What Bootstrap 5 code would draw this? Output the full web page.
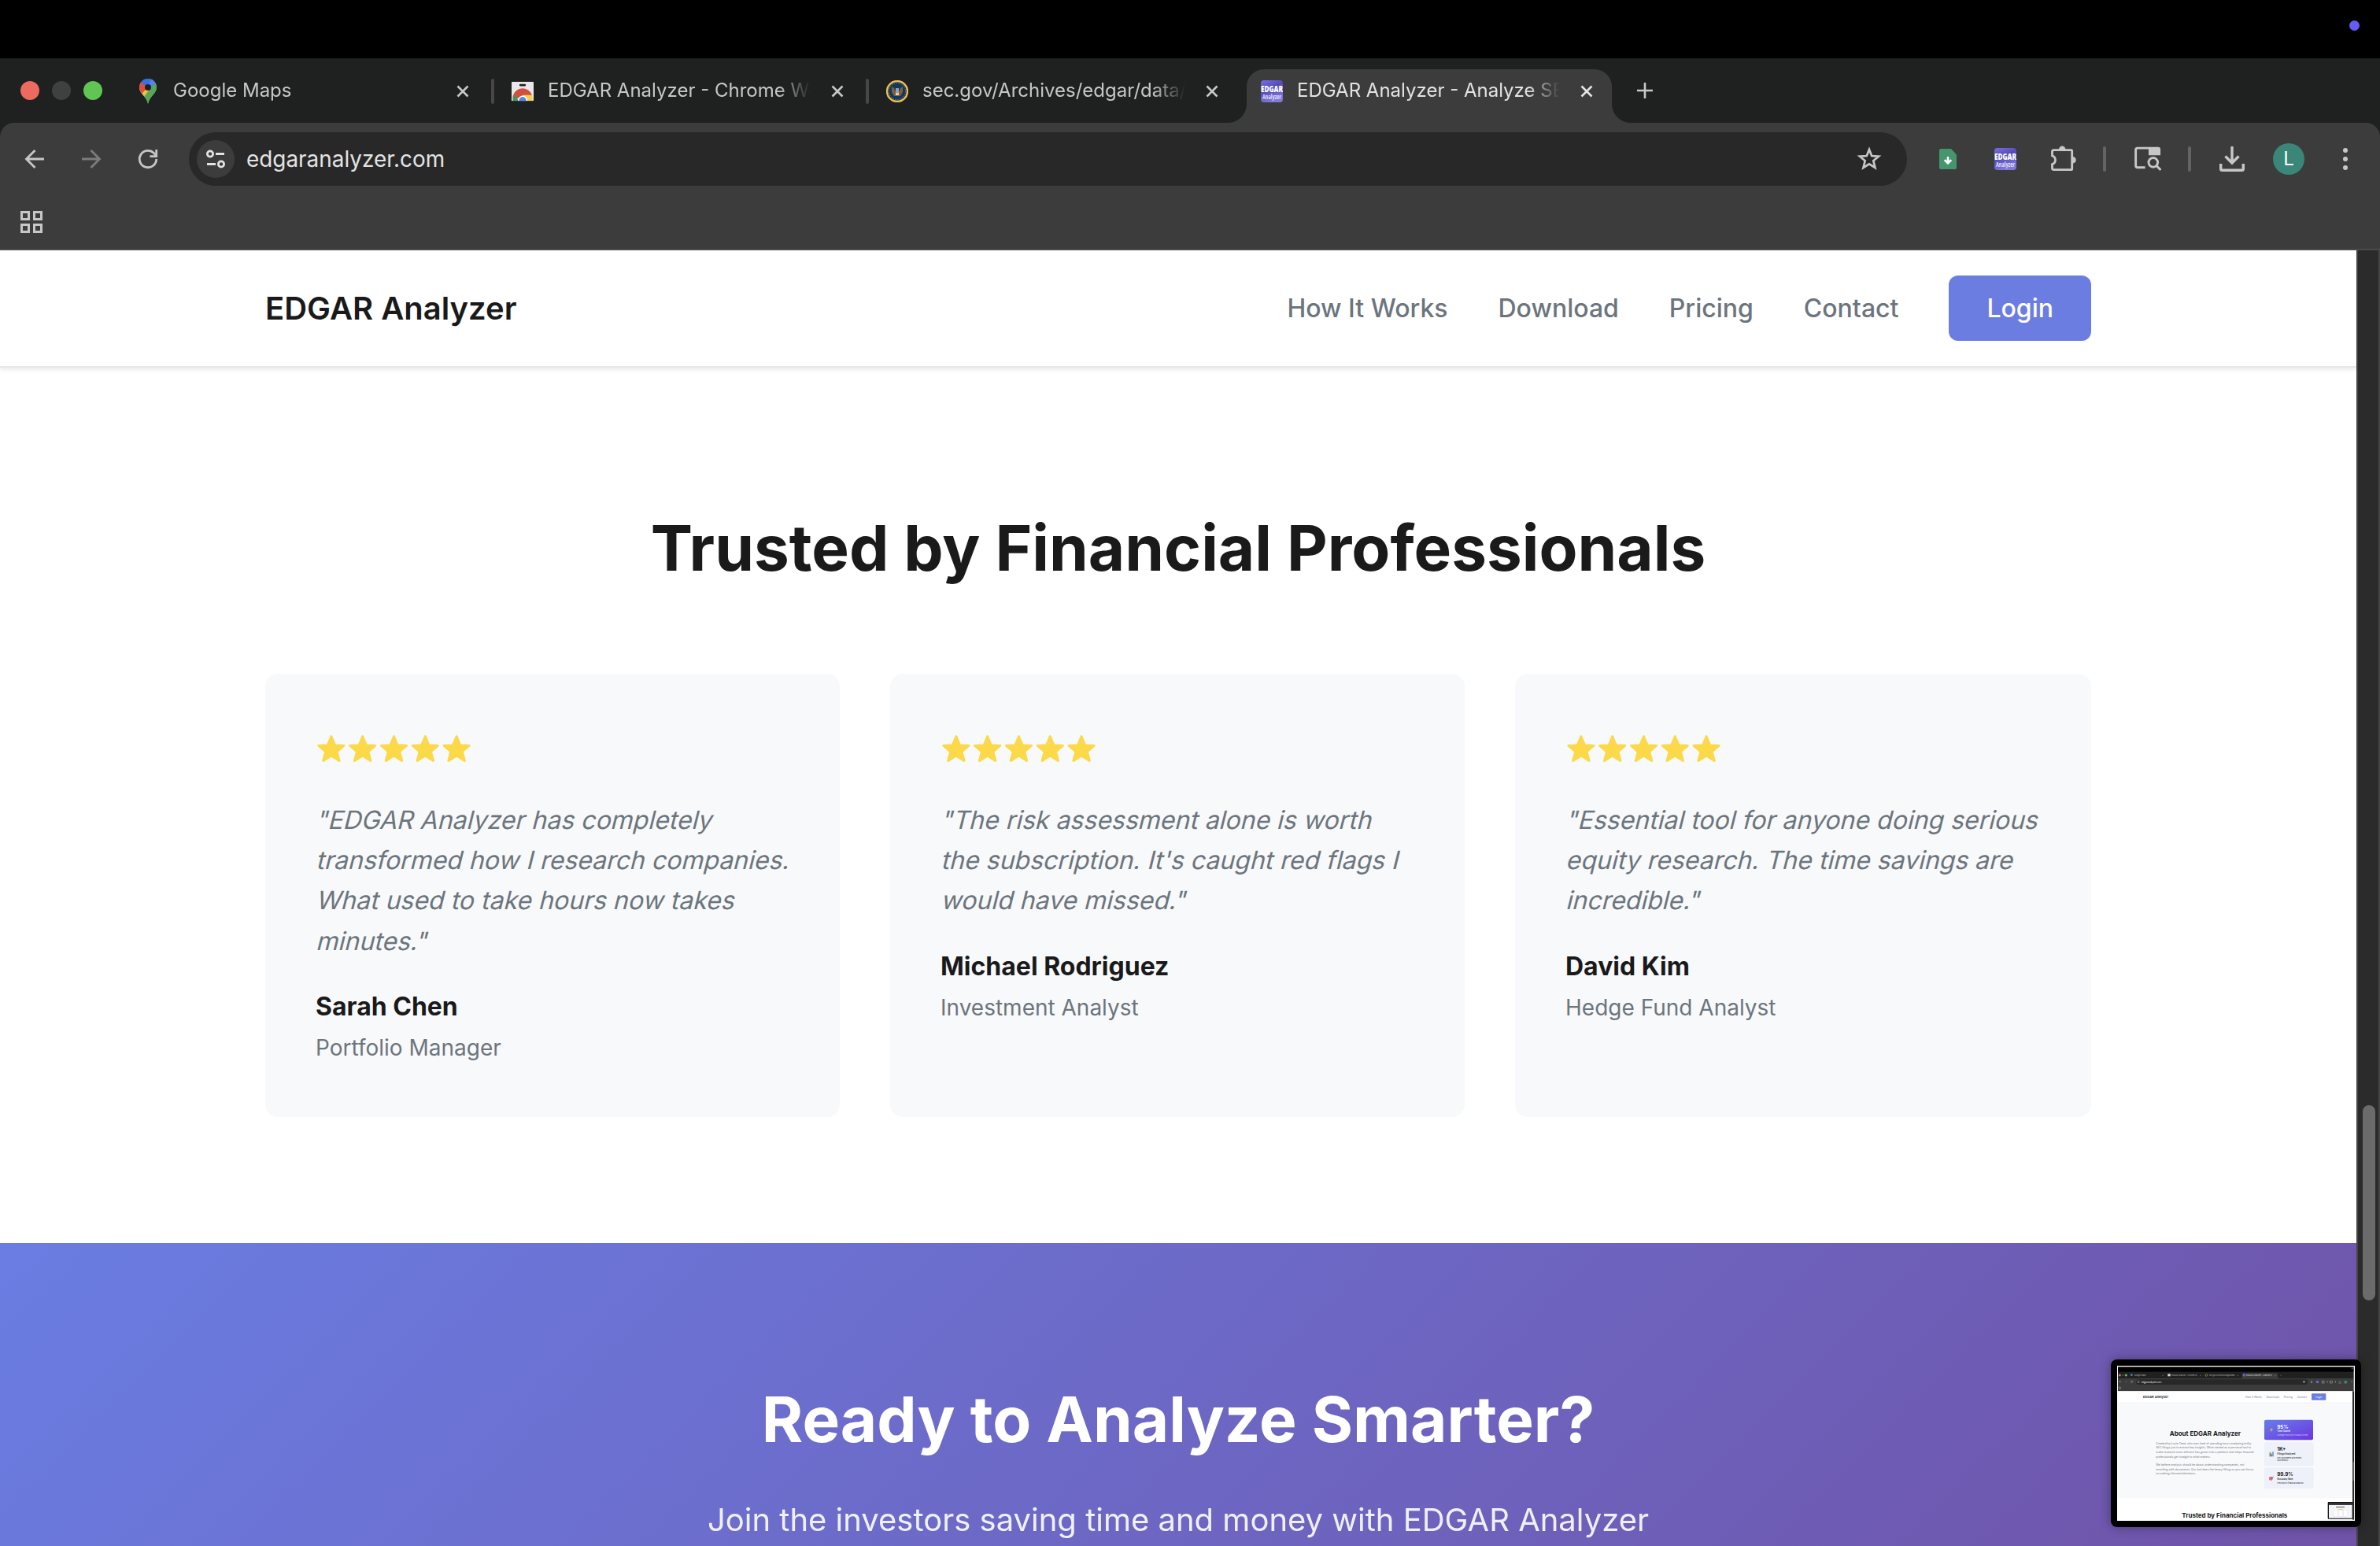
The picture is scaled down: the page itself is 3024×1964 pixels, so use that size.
<!DOCTYPE html>
<html lang="en">
<head>
    <meta charset="UTF-8">
    <meta name="viewport" content="width=device-width, initial-scale=1.0">
    <title>EDGAR Analyzer - Analyze SEC Filings</title>
    <link rel="stylesheet" href="https://cdn.jsdelivr.net/npm/bootstrap@5.3.0/dist/css/bootstrap.min.css">
    <style>
        body {
            width: 3024px;
            height: 1964px;
            overflow: hidden;
            background: #000;
            color: #1a1a1a;
            font-family: Inter, "Liberation Sans", sans-serif;
            font-size: 32px;
            line-height: 1.6;
        }
        svg { display: block; flex: none; }

        /* Browser window */
        .menu-strip { height: 74px; padding-right: 26px; }
        .rec-dot { width: 13px; height: 13px; background: #635df0; margin-top: -9px; }
        .tab-strip { height: 82px; background: #1f2120; padding-left: 26px; }
        .lights { width: 126px; gap: 16px; }
        .lights span { width: 24px; height: 24px; border-radius: 50%; }
        .light-red { background: #ed6a5e; }
        .light-off { background: #3f403f; }
        .light-green { background: #61c554; }
        .win-tab { width: 476px; height: 82px; padding-left: 22px; font-size: 24px; line-height: 32px; color: #c7c7c7; }
        .win-tab svg { margin-top: 2px; }
        .win-tab .tab-label {
            width: 336px;
            margin-left: 18px;
            white-space: nowrap;
            -webkit-mask-image: linear-gradient(90deg, #000 292px, transparent 334px);
        }
        .win-tab .tab-x { margin-left: 24px; }
        .win-tab .tab-line { width: 4px; height: 32px; border-radius: 2px; background: #464746; margin: 2px 0 0 28px; }
        .win-tab.current { color: #e3e3e3; position: relative; z-index: 0; }
        .win-tab.current::before {
            content: "";
            position: absolute;
            z-index: -1;
            left: 4px;
            top: 14px;
            width: 464px;
            height: 68px;
            background: #3c3c3c;
            border-radius: 22px 22px 0 0;
        }
        .flare { position: absolute; bottom: 0; width: 24px; height: 24px; }
        .flare-l { left: -20px; background: radial-gradient(circle at 0 0, transparent 23.5px, #3c3c3c 24.5px); }
        .flare-r { left: 468px; background: radial-gradient(circle at 100% 0, transparent 23.5px, #3c3c3c 24.5px); }
        .new-tab { margin-left: 20px; }
        .toolbar-wrap { height: 162px; background: #1f2120; }
        .toolbar-in { height: 162px; background: #3c3c3c; border-bottom: 2px solid #4a4a4a; border-radius: 18px 18px 0 0; }
        .tool-row { height: 92px; padding: 0 40px 0 30px; }
        .tool-forward, .tool-reload, .tool-puzzle { margin-left: 44px; }
        .tool-green { margin-left: 41px; }
        .tool-edgar, .tool-menu { margin-left: 48px; }
        .tool-panel, .tool-download, .avatar { margin-left: 36px; }
        .omnibox { width: 2184px; height: 68px; border-radius: 34px; background: #282828; padding: 0 32px 0 10px; margin-left: 38px; }
        .site-info { width: 48px; height: 48px; background: #3c3c3c; }
        .address { font-size: 27.9px; line-height: 40px; color: #e3e3e3; margin-left: 15px; }
        .tool-line { width: 4px; height: 32px; border-radius: 2px; background: #646464; margin-left: 34px; }
        .avatar { width: 40px; height: 40px; background: #3a8678; color: #fff; font-size: 24px; line-height: 40px; }
        .bookmarks { padding: 20px 0 0 26px; }

        /* Page */
        .viewport-row { height: 1646px; overflow: hidden; }
        .page { width: 2994px; background: #fff; }
        .page-inner { width: 2320px; margin: 0 auto; }
        .site-nav { height: 149px; background: #fff; border-bottom: 2px solid #e4e7ea; box-shadow: 0 2px 6px rgba(0, 0, 0, .1); position: relative; z-index: 1; }
        .brand-name { font-size: 40px; font-weight: 600; line-height: 64px; }
        .site-links { gap: 64px; font-weight: 500; color: #6c757d; }
        .login-btn { background: #6b7de1; color: #fff; border-radius: 12px; padding: 16px 48px; }
        .big-title { font-size: 80px; font-weight: 700; line-height: 128px; }
        .quotes-section { height: 1112px; padding-top: 165px; }
        .quote-grid { display: grid; grid-template-columns: 730px 730px 732px; gap: 64px; margin-top: 96px; }
        .quote-box { height: 563px; background: #f8f9fb; border-radius: 16px; padding: 64px; }
        .stars { height: 62px; margin-bottom: 34px; }
        .quote-text { color: #6c757d; margin-bottom: 32px; white-space: nowrap; }
        /* upright letterforms slanted about the baseline */
        .quote-text span { display: block; transform: skewX(-14deg); transform-origin: 0 37px; }
        .quote-role { color: #6c757d; }
        .quote-role span { font-size: 28px; }
        .cta { height: 724px; padding-top: 160px; color: #fff; background: linear-gradient(135deg, #6a7de2 0%, #704fa2 100%); }
        .cta p { font-size: 40px; line-height: 64px; margin-top: 32px; opacity: .9; }

        .scroll-track { width: 30px; background: #2b2b2b; border-left: 2px solid #454545; border-right: 2px solid #454545; padding: 1086px 0 0 6px; }
        .scroll-thumb { width: 16px; height: 248px; border-radius: 8px; background: #6b6b6b; }

        /* Floating capture preview */
        .preview { position: absolute; left: 2682px; top: 1727px; width: 318px; height: 213px; padding: 8px; background: #000; border-radius: 8px; box-shadow: 0 0 14px rgba(0, 0, 0, .35); z-index: 5; }
    </style>
</head>
<body class="position-relative d-flex flex-column">

    <!-- Shared shapes -->
    <svg width="0" height="0" class="position-absolute">
        <defs>
            <linearGradient id="edgarBg" x1="0" y1="0" x2=".4" y2="1">
                <stop offset="0" stop-color="#7a70e8"/>
                <stop offset=".45" stop-color="#544bb8"/>
                <stop offset="1" stop-color="#8078dc"/>
            </linearGradient>
            <symbol id="edgar" viewBox="0 0 28 28">
                <rect width="28" height="28" rx="4" fill="url(#edgarBg)"/>
                <text x="0" y="15" textLength="28" lengthAdjust="spacingAndGlyphs" font-family="Open Sans, sans-serif" font-size="11" font-weight="800" fill="#fff">EDGAR</text>
                <text x="2" y="23.500" textLength="24" lengthAdjust="spacingAndGlyphs" font-family="Open Sans, sans-serif" font-size="8" font-weight="700" fill="#e4e2fa">Analyzer</text>
            </symbol>
            <symbol id="close" viewBox="0 0 16 16">
                <path d="M1.500 1.500l13 13M14.500 1.500l-13 13" stroke="currentColor" stroke-width="2.600" fill="none"/>
            </symbol>
            <symbol id="star" viewBox="0 0 40 40">
                <path d="M20 4.500L24.600 15.600L36.200 16.200L27.200 23.900L30.300 35.500L20 29L9.700 35.500L12.800 23.900L3.800 16.200L15.400 15.600Z" fill="#fbd949" stroke="#fbd949" stroke-width="3" stroke-linejoin="round"/>
            </symbol>
            <symbol id="five" viewBox="0 0 200 40">
                <use href="#star" width="40" height="40"/><use href="#star" x="40" width="40" height="40"/><use href="#star" x="80" width="40" height="40"/><use href="#star" x="120" width="40" height="40"/><use href="#star" x="160" width="40" height="40"/>
            </symbol>
            <symbol id="store" viewBox="0 0 30 26">
                <rect width="30" height="26" rx="1" fill="#e8e8e8"/>
                <rect x="10.500" y="3" width="9" height="3" rx="1.500" fill="#222"/>
                <path d="M2 26A13 13 0 0 1 28 19L15 19Z" fill="#d0503f"/>
                <path d="M2 26A13 13 0 0 1 4.500 17L9.500 26Z" fill="#3f9a5f"/>
                <path d="M15 18H27.500A13 13 0 0 1 28.500 26H15Z" fill="#f6cf55"/>
                <path d="M8.500 26A6.500 7 0 0 1 21.500 26Z" fill="#fff"/>
                <path d="M10 26A5 5.500 0 0 1 20 26Z" fill="#4f86ec"/>
            </symbol>
        </defs>
    </svg>

    <div class="menu-strip d-flex align-items-center justify-content-end">
        <span class="rec-dot rounded-circle"></span>
    </div>

    <!-- Tabs -->
    <div class="tab-strip d-flex align-items-center">
        <div class="lights d-flex align-items-center">
            <span class="light-red"></span>
            <span class="light-off"></span>
            <span class="light-green"></span>
        </div>
        <div class="win-tab d-flex align-items-center">
            <svg width="28" height="32" viewBox="0 0 28 32">
                <clipPath id="pin"><path d="M14 0C20 0 25 4.800 25 11C25 19 16 22 14 32C12 22 3 19 3 11C3 4.800 8 0 14 0Z"/></clipPath>
                <g clip-path="url(#pin)">
                    <rect width="28" height="32" fill="#58a55c"/>
                    <path d="M0 12H8L14 11L20 12L9 26L0 24Z" fill="#f2bf42"/>
                    <path d="M0 3L6 4L14 11L5 20L0 16Z" fill="#d85140"/>
                    <path d="M3 0H20L14 11L5 4.500Z" fill="#3870e0"/>
                    <path d="M19 0L28 3V9L24 10L17 15L13 12Z" fill="#5383ec"/>
                    <path d="M23 5L28 9V32H12L8 24Z" fill="#58a55c"/>
                    <path d="M18.500 0L28 3L22.500 6L15 14L13 11Z" fill="#5383ec"/>
                </g>
                <circle cx="14" cy="11" r="4" fill="#1f2120"/>
            </svg>
            <span class="tab-label">Google Maps</span>
            <svg class="tab-x" width="16" height="16"><use href="#close"/></svg>
            <span class="tab-line"></span>
        </div>
        <div class="win-tab d-flex align-items-center">
            <svg width="28" height="28" viewBox="0 -1 30 28"><use href="#store" width="30" height="26"/></svg>
            <span class="tab-label">EDGAR Analyzer - Chrome We</span>
            <svg class="tab-x" width="16" height="16"><use href="#close"/></svg>
            <span class="tab-line"></span>
        </div>
        <div class="win-tab d-flex align-items-center">
            <svg width="28" height="28" viewBox="0 0 28 28">
                <circle cx="14" cy="14" r="13" fill="#17365f" stroke="#edc04f" stroke-width="2.400"/>
                <circle cx="14" cy="14" r="10.600" fill="none" stroke="#8b8250" stroke-width="1" stroke-dasharray="1.500 1.500"/>
                <path d="M7 8L10 10L11.500 14L14 10L16.500 14L18 10L21 8V15L18 20H10L7 15Z" fill="#7f5f36"/>
                <rect x="12" y="10" width="4" height="6" fill="#8ea3b8"/>
                <rect x="12" y="16" width="4" height="3" fill="#e8c8b8"/>
            </svg>
            <span class="tab-label">sec.gov/Archives/edgar/data/2</span>
            <svg class="tab-x" width="16" height="16"><use href="#close"/></svg>
        </div>
        <div class="win-tab current d-flex align-items-center">
            <span class="flare flare-l"></span>
            <span class="flare flare-r"></span>
            <svg width="28" height="28"><use href="#edgar"/></svg>
            <span class="tab-label">EDGAR Analyzer - Analyze SE</span>
            <svg class="tab-x" width="16" height="16"><use href="#close"/></svg>
        </div>
        <svg class="new-tab" width="28" height="20" viewBox="-2 0 24 20"><path d="M10 0V20M0 10H20" stroke="#c7c7c7" stroke-width="2.600"/></svg>
    </div>

    <!-- Toolbar -->
    <div class="toolbar-wrap">
        <div class="toolbar-in">
            <div class="tool-row d-flex align-items-center">
                <svg width="28" height="28" viewBox="0 0 28 28" fill="none" stroke="#c7c7c7" stroke-width="2.800"><path d="M26 14H4M14.500 3L3.500 14L14.500 25"/></svg>
                <svg class="tool-forward" width="28" height="28" viewBox="0 0 28 28" fill="none" stroke="#7c7c7c" stroke-width="2.800"><path d="M2 14H24M13.500 3L24.500 14L13.500 25"/></svg>
                <svg class="tool-reload" width="28" height="28" viewBox="0 0 28 28" fill="none" stroke="#c7c7c7" stroke-width="2.800"><path d="M24.700 14A10.700 10.700 0 1 1 21.500 6.400L25 10"/><path d="M24.700 2V10.600H16.500"/></svg>
                <div class="omnibox d-flex align-items-center">
                    <div class="site-info rounded-circle d-flex align-items-center justify-content-center">
                        <svg width="26" height="26" viewBox="0 0 26 26" fill="none" stroke="#e3e3e3" stroke-width="2.800"><circle cx="6" cy="6.500" r="3.600"/><path d="M13 6.500H24M2 19.500H13"/><circle cx="20" cy="19.500" r="3.600"/></svg>
                    </div>
                    <span class="address">edgaranalyzer.com</span>
                    <svg class="ms-auto" width="32" height="32" viewBox="0 0 32 32"><path d="M16 4L19.200 12L28 12.700L21.300 18.300L23.500 27L16 22.300L8.500 27L10.700 18.300L4 12.700L12.800 12Z" fill="none" stroke="#c7c7c7" stroke-width="2.700"/></svg>
                </div>
                <svg class="tool-green" width="22" height="26" viewBox="0 0 22 26"><path d="M2 0H15L22 7.500V24Q22 26 20 26H2Q0 26 0 24V2Q0 0 2 0Z" fill="#45966c"/><path d="M11 10V18M6.700 14.200L11 18.500L15.300 14.200" stroke="#fff" stroke-width="2.600" fill="none"/></svg>
                <svg class="tool-edgar" width="28" height="28"><use href="#edgar"/></svg>
                <svg class="tool-puzzle" width="32" height="34" viewBox="0 0 32 34">
                    <path d="M3.500 5.700H25.500Q26.700 5.700 26.700 7V29.500Q26.700 30.700 25.500 30.700H3.500Q1.500 30.700 1.500 29V23.500A5.600 5.600 0 0 0 1.500 12.800V7.500Q1.500 5.700 3.500 5.700Z" fill="none" stroke="#c7c7c7" stroke-width="2.800"/>
                    <path d="M10 5A4.200 4.500 0 0 1 18.400 5ZM27.500 14A4.200 4.200 0 0 1 27.500 22.500Z" fill="#c7c7c7"/>
                </svg>
                <span class="tool-line"></span>
                <svg class="tool-panel" width="34" height="32" viewBox="0 0 35 32">
                    <path d="M14 27H4Q1.700 27 1.700 24.700V4Q1.700 1.700 4 1.700H31Q32.500 1.700 32.500 3.500V10" fill="none" stroke="#c7c7c7" stroke-width="3"/>
                    <path d="M18.500 1H31Q34 1 34 4V11H18.500Z" fill="#c7c7c7"/>
                    <circle cx="24.500" cy="20.500" r="6" fill="#3c3c3c" stroke="#c7c7c7" stroke-width="3"/>
                    <path d="M28.500 24.500L34.300 30.300" stroke="#c7c7c7" stroke-width="3"/>
                </svg>
                <span class="tool-line"></span>
                <svg class="tool-download" width="32" height="32" viewBox="0 0 32 32" fill="none" stroke="#c7c7c7" stroke-width="3.400"><path d="M16 0V21M7.500 12.500L16 21L24.500 12.500M1.700 22V28.500Q1.700 30.300 3.500 30.300H28.500Q30.300 30.300 30.300 28.500V22"/></svg>
                <div class="avatar rounded-circle text-center">L</div>
                <svg class="tool-menu" width="8" height="32" viewBox="0 0 8 32" fill="#c7c7c7"><circle cx="4" cy="5" r="3"/><circle cx="4" cy="16" r="3"/><circle cx="4" cy="27" r="3"/></svg>
            </div>
            <div class="bookmarks">
                <svg width="28" height="28" viewBox="0 0 28 28" fill="none" stroke="#c7c7c7" stroke-width="3"><path d="M1.500 1.500H10.500V10.500H1.500ZM17.500 1.500H26.500V10.500H17.500ZM1.500 17.500H10.500V26.500H1.500ZM17.500 17.500H26.500V26.500H17.500Z"/></svg>
            </div>
        </div>
    </div>

    <!-- Page content -->
    <div class="viewport-row d-flex">
        <main class="page">
            <nav class="site-nav">
                <div class="page-inner h-100 d-flex align-items-center justify-content-between">
                    <span class="brand-name">EDGAR Analyzer</span>
                    <div class="site-links d-flex align-items-center">
                        <span>How It Works</span>
                        <span>Download</span>
                        <span>Pricing</span>
                        <span>Contact</span>
                        <span class="login-btn">Login</span>
                    </div>
                </div>
            </nav>

            <section class="quotes-section">
                <h2 class="big-title text-center mb-0">Trusted by Financial Professionals</h2>
                <div class="page-inner quote-grid">
                    <div class="quote-box">
                        <div class="stars d-flex align-items-center"><svg width="199" height="40"><use href="#five"/></svg></div>
                        <p class="quote-text"><span>"EDGAR Analyzer has completely</span><span>transformed how I research companies.</span><span>What used to take hours now takes</span><span>minutes."</span></p>
                        <div class="fw-bold">Sarah Chen</div>
                        <div class="quote-role"><span>Portfolio Manager</span></div>
                    </div>
                    <div class="quote-box">
                        <div class="stars d-flex align-items-center"><svg width="199" height="40"><use href="#five"/></svg></div>
                        <p class="quote-text"><span>"The risk assessment alone is worth</span><span>the subscription. It's caught red flags I</span><span>would have missed."</span></p>
                        <div class="fw-bold">Michael Rodriguez</div>
                        <div class="quote-role"><span>Investment Analyst</span></div>
                    </div>
                    <div class="quote-box">
                        <div class="stars d-flex align-items-center"><svg width="199" height="40"><use href="#five"/></svg></div>
                        <p class="quote-text"><span>"Essential tool for anyone doing serious</span><span>equity research. The time savings are</span><span>incredible."</span></p>
                        <div class="fw-bold">David Kim</div>
                        <div class="quote-role"><span>Hedge Fund Analyst</span></div>
                    </div>
                </div>
            </section>

            <section class="cta text-center">
                <h2 class="big-title mb-0">Ready to Analyze Smarter?</h2>
                <p class="mb-0">Join the investors saving time and money with EDGAR Analyzer</p>
            </section>
        </main>
        <div class="scroll-track"><div class="scroll-thumb"></div></div>
    </div>

    <!-- Capture preview, drawn at three units per pixel -->
    <div class="preview">
        <svg width="302" height="197" viewBox="90 106 906 591" font-family="Inter, sans-serif">
            <defs><linearGradient id="stat" x1="0" y1="0" x2="1" y2="1"><stop offset="0" stop-color="#667eea"/><stop offset="1" stop-color="#6c35e0"/></linearGradient></defs>
            <rect x="90" y="106" width="906" height="591" fill="#fff"/>
            <rect x="93" y="110" width="899" height="20" fill="#000"/>
            <circle cx="986" cy="116" r="3" fill="#4b46b0"/>
            <rect x="93" y="129" width="899" height="26" fill="#1f2120"/>
            <path d="M562 155Q567 153 567 148V138Q567 134 571 134H698Q702 134 702 138V148Q702 153 707 155Z" fill="#3c3c3c"/>
            <rect x="93" y="154" width="899" height="49" fill="#3c3c3c"/>
            <circle cx="100" cy="142" r="4.500" fill="#ed6a5e"/><circle cx="112" cy="142" r="4" fill="#444"/><circle cx="124" cy="142" r="4.500" fill="#61c554"/>
            <circle cx="145" cy="141" r="4" fill="#4f86c0"/><rect x="283" y="137" width="10" height="9" fill="#ddd"/><circle cx="430" cy="142" r="4" fill="none" stroke="#b5964a" stroke-width="2"/><rect x="569" y="137" width="9" height="9" fill="#6a60d8"/>
            <g font-size="8" fill="#aaa">
                <text x="155" y="145" textLength="45">Google Maps</text><text x="262" y="145">×</text>
                <text x="297" y="145" textLength="98">EDGAR Analyzer - Chrome W</text><text x="405" y="145">×</text>
                <text x="440" y="145" textLength="98">sec.gov/Archives/edgar/data</text><text x="547" y="145">×</text>
                <text x="582" y="145" textLength="98" fill="#ddd">EDGAR Analyzer - Analyze S</text><text x="690" y="145">×</text><text x="711" y="145">+</text>
            </g>
            <rect x="162" y="158" width="655" height="20" rx="10" fill="#282828"/>
            <g fill="none" stroke="#aaa" stroke-width="1.500">
                <path d="M106 167H98L101 164M98 167L101 170"/><path d="M120 167H128L125 164" stroke="#666"/><circle cx="146" cy="167" r="3.500"/><circle cx="171" cy="167" r="4"/>
                <path d="M802 163L806 170L798 166H806L799 170Z"/><rect x="871" y="164" width="8" height="8"/><rect x="902" y="164" width="9" height="8"/><path d="M939 163V170M934 172H944M891 163V172M922 163V172"/><path d="M983 163V172" stroke-dasharray="2 2"/><rect x="97" y="187" width="7" height="7"/>
            </g>
            <text x="182" y="171" font-size="10" textLength="77" fill="#ddd">edgaranalyzer.com</text>
            <rect x="828" y="164" width="6" height="8" fill="#45966c"/><rect x="849" y="163" width="9" height="9" fill="#6a60d8"/><circle cx="961" cy="168" r="6" fill="#3a8678"/>
            <rect x="93" y="203" width="894" height="43" fill="#fff"/>
            <rect x="93" y="246" width="894" height="365" fill="#f8f9fb"/>
            <path d="M93 246.500H987" stroke="#e4e6e9"/>
            <text x="189" y="228" font-size="12" font-weight="600" textLength="96" fill="#1a1a1a">EDGAR Analyzer</text>
            <g font-size="9.500" fill="#6c757d"><text x="579" y="228" textLength="62">How It Works</text><text x="659" y="228" textLength="48">Download</text><text x="725" y="228" textLength="33">Pricing</text><text x="776" y="228" textLength="37">Contact</text></g>
            <rect x="831" y="212" width="55" height="25" rx="2" fill="#6b7de1"/><text x="846" y="228" font-size="9.500" textLength="25" fill="#fff">Login</text>
            <text x="290" y="372" font-size="24" font-weight="700" textLength="271" fill="#1a1a1a">About EDGAR Analyzer</text>
            <g font-size="10.500" fill="#6c757d">
                <text x="238" y="405" textLength="363">Created by Louie Teed, who was tired of spending hours analyzing bulky</text>
                <text x="238" y="422" textLength="362">SEC filings just to extract key insights. What started as a personal tool to</text>
                <text x="238" y="439" textLength="373">make research more efficient has grown into a platform that helps financial</text>
                <text x="238" y="456" textLength="208">professionals get straight to what matters.</text>
                <text x="238" y="487" textLength="336">We believe analysis should be about understanding companies, not</text>
                <text x="238" y="504" textLength="372">wrestling with documents. Our tool does the heavy lifting so you can focus</text>
                <text x="238" y="521" textLength="152">on making informed decisions.</text>
            </g>
            <rect x="651" y="312" width="186" height="77" rx="6" fill="url(#stat)"/>
            <rect x="651.500" y="399" width="186" height="87" rx="6" fill="#eef1f9" stroke="#e2e6f2"/>
            <rect x="651.500" y="495" width="186" height="78" rx="6" fill="#eef1f9" stroke="#e2e6f2"/>
            <path d="M681 342L671 352H677L674 359L685 348H679Z" fill="#f5b04a"/>
            <rect x="669" y="434" width="18" height="18" fill="#dfe6ea"/><path d="M671 452V437H676V452Z" fill="#3f9a5f"/><path d="M677 452V443H681V452Z" fill="#d85140"/><path d="M682 452V434H686V452Z" fill="#4f86ec"/>
            <circle cx="676" cy="536" r="7" fill="#c9483e"/><circle cx="676" cy="536" r="3.500" fill="none" stroke="#fff" stroke-width="1.500"/><path d="M677 535L686 529" stroke="#444" stroke-width="2"/>
            <g fill="#fff"><text x="700" y="345" font-size="19" font-weight="700" textLength="43">95%</text><text x="700" y="359" font-size="8.500" font-weight="600" textLength="49">Time Saved</text><text x="700" y="372" font-size="7.500" textLength="117" fill="#cfcaf5">Average reduction in analysis time</text></g>
            <g fill="#1a1a1a"><text x="700" y="431" font-size="19" font-weight="700" textLength="33">1K+</text><text x="700" y="446" font-size="8.500" font-weight="600" textLength="69">Filings Analyzed</text><text x="700" y="459" font-size="7.500" textLength="92">SEC documents processed</text><text x="700" y="468" font-size="7.500" textLength="42">successfully</text>
            <text x="700" y="527" font-size="19" font-weight="700" textLength="61">99.9%</text><text x="700" y="542" font-size="8.500" font-weight="600" textLength="60">Accuracy Rate</text><text x="700" y="555" font-size="7.500" textLength="100">Precision in financial analysis</text></g>
            <text x="337" y="686" font-size="24" font-weight="700" textLength="402" fill="#1a1a1a">Trusted by Financial Professionals</text>
            <rect x="987" y="203" width="6" height="490" fill="#2b2b2b"/><rect x="989" y="472" width="3" height="72" rx="1" fill="#777"/>
            <rect x="893" y="625" width="95" height="65" rx="3" fill="#111"/><rect x="897" y="636" width="89" height="51" fill="#f4f5fb"/><rect x="897" y="628" width="89" height="8" fill="#333"/>
            <rect x="924" y="643" width="33" height="3" fill="#555"/>
            <g fill="#fff" stroke="#d5d9f0"><rect x="915" y="656" width="15" height="24"/><rect x="934" y="654" width="15" height="26"/><rect x="953" y="656" width="15" height="24"/></g><rect x="934" y="653" width="15" height="3" fill="#f2bf42"/>
        </svg>
    </div>

    <script src="https://cdn.jsdelivr.net/npm/bootstrap@5.3.0/dist/js/bootstrap.bundle.min.js"></script>
</body>
</html>
